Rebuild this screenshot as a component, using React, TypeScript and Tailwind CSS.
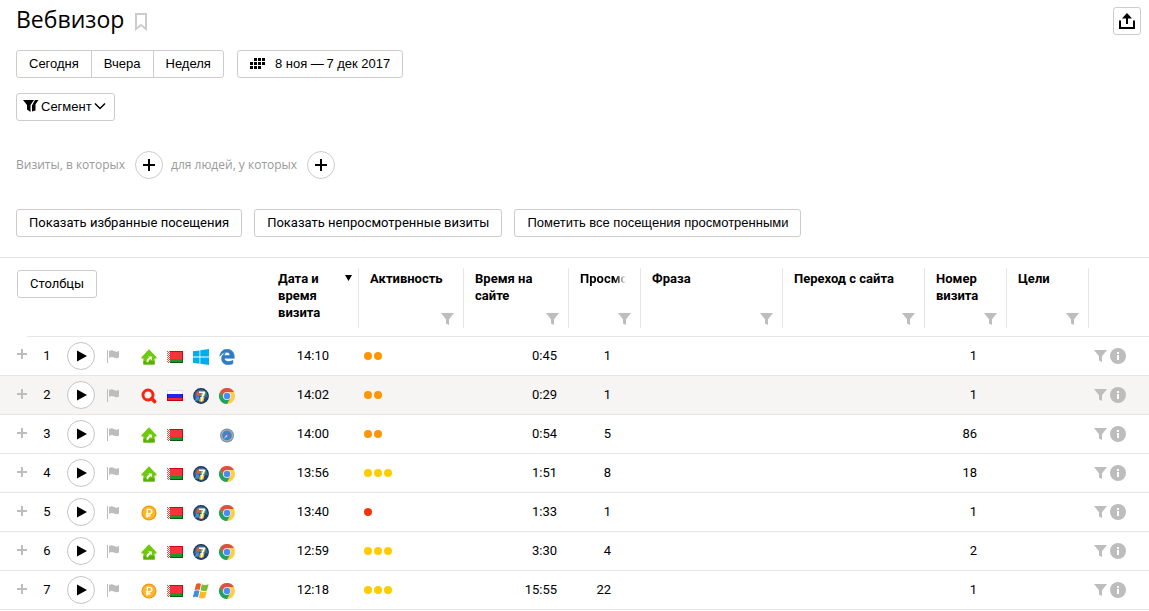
import type { ReactNode } from "react";
import { FaEdgeLegacy } from "react-icons/fa6";

type Source = "direct" | "search" | "ad";
type Country = "by" | "ru";
type System = "win10" | "win7" | "winxp" | "none";
type Browser = "edge" | "chrome" | "safari";

interface Visit {
  id: number;
  source: Source;
  country: Country;
  system: System;
  browser: Browser;
  time: string;
  activity: number;
  duration: string;
  views: number;
  visitNumber: number;
}

const visits: Visit[] = [
  { id: 1, source: "direct", country: "by", system: "win10", browser: "edge", time: "14:10", activity: 2, duration: "0:45", views: 1, visitNumber: 1 },
  { id: 2, source: "search", country: "ru", system: "win7", browser: "chrome", time: "14:02", activity: 2, duration: "0:29", views: 1, visitNumber: 1 },
  { id: 3, source: "direct", country: "by", system: "none", browser: "safari", time: "14:00", activity: 2, duration: "0:54", views: 5, visitNumber: 86 },
  { id: 4, source: "direct", country: "by", system: "win7", browser: "chrome", time: "13:56", activity: 3, duration: "1:51", views: 8, visitNumber: 18 },
  { id: 5, source: "ad", country: "by", system: "win7", browser: "chrome", time: "13:40", activity: 1, duration: "1:33", views: 1, visitNumber: 1 },
  { id: 6, source: "direct", country: "by", system: "win7", browser: "chrome", time: "12:59", activity: 3, duration: "3:30", views: 4, visitNumber: 2 },
  { id: 7, source: "ad", country: "by", system: "winxp", browser: "chrome", time: "12:18", activity: 3, duration: "15:55", views: 22, visitNumber: 1 },
];

const activityColors: Record<number, string> = {
  1: "bg-[#f5330f]",
  2: "bg-[#ff9500]",
  3: "bg-[#ffcc00]",
};

const FilterIcon = () => (
  <svg width="13" height="12" viewBox="0 0 13 12" fill="#bdbdbd">
    <path d="M0 0h13L8 6.2V12L5 10.4V6.2z" />
  </svg>
);

const InfoIcon = () => (
  <svg width="16" height="16" viewBox="0 0 16 16">
    <circle cx="8" cy="8" r="8" fill="#bdbdbd" />
    <path d="M7 4h2v2H7zM7 7h2v5H7z" fill="#fff" />
  </svg>
);

const PlusIcon = () => (
  <svg width="12" height="12" viewBox="0 0 12 12" fill="#000">
    <path d="M5 0h2v5h5v2H7v5H5V7H0V5h5z" />
  </svg>
);

const HouseIcon = () => (
  <svg width="16" height="16" viewBox="0 0 16 16">
    <path d="M8 .3 15.6 8.2V9.4H13.6V15.5H2.4V9.4H.4V8.2z" fill="#6fc90c" />
    <path d="M2.4 12h11.2v3.5H2.4z" fill="#58b000" />
    <path d="M5.6 13.2C5.2 11 6.2 9.4 8.4 8.8L7 7.4H10.8V11.2L9.6 10C8.2 10.6 7.4 11.6 7.4 13.2z" fill="#fff" />
  </svg>
);

const SearchIcon = () => (
  <svg width="16" height="16" viewBox="0 0 16 16" fill="none">
    <circle cx="7" cy="7" r="5" stroke="#f5250e" strokeWidth="3" />
    <path d="m10.6 10.6 3 3" stroke="#f5250e" strokeWidth="3.6" strokeLinecap="round" />
  </svg>
);

const AdIcon = () => (
  <svg width="16" height="16" viewBox="0 0 16 16">
    <circle cx="8" cy="8" r="7.6" fill="#f29a13" />
    <circle cx="8" cy="8" r="6.3" fill="#fdb52e" />
    <path d="M6.3 12.4V4.4H8.6a2.1 2.1 0 0 1 0 4.4H4.9M4.9 10.7H9.4" fill="none" stroke="#fff" strokeWidth="1.4" />
  </svg>
);

const BelarusFlag = () => (
  <svg width="16" height="16" viewBox="0 0 16 16" shapeRendering="crispEdges">
    <path d="M0 2h16v8H0z" fill="#c80a14" />
    <path d="M3 3h12v7H3z" fill="#fa323c" />
    <path d="M0 10h16v4H0z" fill="#0a5a14" />
    <path d="M3 10h12v3H3z" fill="#1f9628" />
    <path d="M0 2h3v12H0z" fill="#fff" />
    <path d="M0 2h1v1H0zM2 2h1v1H2zM1 3h1v1H1zM0 4h1v1H0zM2 4h1v1H2zM1 5h1v1H1zM0 6h1v1H0zM2 6h1v1H2zM1 7h1v1H1zM0 8h1v1H0zM2 8h1v1H2zM1 9h1v1H1zM0 10h1v1H0zM2 10h1v1H2zM1 11h1v1H1zM0 12h1v1H0zM2 12h1v1H2zM1 13h1v1H1z" fill="#e6464c" />
  </svg>
);

const RussiaFlag = () => (
  <svg width="16" height="16" viewBox="0 0 16 16" shapeRendering="crispEdges">
    <path d="M0 2h16v4H0z" fill="#e4e4e4" />
    <path d="M1 3h14v3H1z" fill="#fff" />
    <path d="M0 6h16v4H0z" fill="#0a14b4" />
    <path d="M1 6h14v4H1z" fill="#1e28e6" />
    <path d="M0 10h16v3H0z" fill="#b40a0f" />
    <path d="M1 10h14v2H1z" fill="#f02828" />
  </svg>
);

const WindowsTenIcon = () => (
  <svg width="16" height="16" viewBox="0 0 16 16" fill="#00adef">
    <path d="M0 2.3 6.5 1.4V7.6H0zM7.3 1.3 16 0V7.6H7.3zM0 8.4H6.5V14.7L0 13.7zM7.3 8.4H16V16L7.3 14.8z" />
  </svg>
);

const WindowsPanes = () => (
  <>
    <path d="M3.1 1Q5.5-.4 8 .8L6.6 7Q4.2 5.900 1.600 7.200z" fill="#e8592b" />
    <path d="M8.800 1.200Q11.800 2.600 15.600 1.200L14 7.400Q10.800 8.600 7.500 7.300z" fill="#7cbb36" />
    <path d="M1.400 8Q4 6.800 6.400 7.900L4.900 14.200Q2.600 13-.2 14.400z" fill="#3c8fdc" />
    <path d="M7.300 8.200Q10.400 9.500 13.800 8.300L12.200 14.800Q9 16 5.800 14.700z" fill="#fbbc1c" />
  </>
);

const WindowsXpIcon = () => (
  <svg width="16" height="16" viewBox="0 0 16 16">
    <WindowsPanes />
  </svg>
);

const WindowsSevenIcon = () => (
  <svg width="16" height="16" viewBox="0 0 16 16">
    <circle cx="8" cy="8" r="7.900" fill="#17304f" />
    <circle cx="8" cy="8" r="6.800" fill="#3a6a9c" />
    <path d="M1.400 9.500A6.800 6.800 0 0 0 14.600 9.500Q8 6.500 1.400 9.500z" fill="#1c4472" />
    <g transform="translate(2 3) scale(.7)">
      <WindowsPanes />
    </g>
    <path d="M6 3.400H12V5Q9.800 8.500 9.200 13.400H7.600Q8 8.800 10 5H6z" fill="#fff" />
  </svg>
);

const ChromeIcon = () => (
  <svg width="16" height="16" viewBox="0 0 16 16">
    <circle cx="8" cy="8" r="8" fill="#ffcd40" />
    <path d="M8 4H14.930A8 8 0 0 0 1.070 4L4.540 10z" fill="#dd5144" />
    <path d="M1.070 4A8 8 0 0 0 8 16L11.460 10 8 8 4.540 10z" fill="#1da462" />
    <circle cx="8" cy="8" r="4" fill="#f1f1f1" />
    <circle cx="8" cy="8" r="3.200" fill="#4c8bf5" />
  </svg>
);

const SafariIcon = () => (
  <svg width="16" height="16" viewBox="0 0 16 16">
    <circle cx="8" cy="8.500" r="7" fill="#8a8d92" />
    <circle cx="8" cy="8.500" r="5.800" fill="#b4bcc6" />
    <circle cx="8" cy="8.500" r="4.900" fill="#3f86c8" />
    <path d="M11.200 5.200 8.600 9.100 7.400 7.900z" fill="#e8504a" />
    <path d="M4.800 11.800 7.400 7.900 8.600 9.100z" fill="#dfe9f2" />
  </svg>
);

const sourceIcons: Record<Source, ReactNode> = {
  direct: <HouseIcon />,
  search: <SearchIcon />,
  ad: <AdIcon />,
};

const countryIcons: Record<Country, ReactNode> = {
  by: <BelarusFlag />,
  ru: <RussiaFlag />,
};

const systemIcons: Record<System, ReactNode> = {
  win10: <WindowsTenIcon />,
  win7: <WindowsSevenIcon />,
  winxp: <WindowsXpIcon />,
  none: <span className="w-4" />,
};

const browserIcons: Record<Browser, ReactNode> = {
  edge: <FaEdgeLegacy size={16} color="#2f7cc4" stroke="#2f7cc4" strokeWidth={20} />,
  chrome: <ChromeIcon />,
  safari: <SafariIcon />,
};

const buttonClass = "flex h-7 items-center rounded-[3px] border border-[#ccc] bg-white px-3 pb-[2px] whitespace-nowrap";
const arial = "font-['Liberation_Sans',sans-serif]";
const openSans = "font-['Open_Sans','Noto_Sans',sans-serif]";

const HeaderCell = ({ title, filter = true, sorted = false, clipped = false }: { title: string; filter?: boolean; sorted?: boolean; clipped?: boolean }) => (
  <th scope="col" className="p-0 pt-[10px] pb-2 text-left align-top font-bold">
    <div className={`relative flex h-[60px] justify-between pt-[2px] pr-[10px] ${sorted ? "pl-3" : "border-l border-[#e6e6e6] pl-[11px]"}`}>
      <span className={clipped ? "w-[46px] overflow-hidden [mask-image:linear-gradient(to_right,#000_75%,transparent)]" : sorted ? "w-14" : ""}>{title}</span>
      {sorted && (
        <svg className="mt-1 -mr-1" width="7" height="8" viewBox="0 0 7 8">
          <path d="M0 1h7L3.500 7z" />
        </svg>
      )}
      {filter && (
        <button type="button" aria-label="Фильтр" className="absolute right-[9px] bottom-[3px]">
          <FilterIcon />
        </button>
      )}
    </div>
  </th>
);

const VisitRow = ({ visit }: { visit: Visit }) => {
  const cell = `border-b border-[#e6e6e6] p-0 ${visit.id === 1 ? "h-10 border-t" : "h-[39px]"}`;
  const number = `${cell} pb-[2px] text-right`;

  return (
    <tr className={visit.id === 2 ? "bg-[#f6f5f3]" : ""}>
      <td className="border-b border-[#e6e6e6] p-0">
        <button type="button" aria-label="Развернуть" className="mb-[3px] ml-4 flex">
          <svg width="12" height="12" viewBox="0 0 12 12" fill="#bdbdbd">
            <path d="M5 1h2v4h4v2H7v4H5V7H1V5h4z" />
          </svg>
        </button>
      </td>
      <td className={`${cell} pb-[2px] text-center`}>{visit.id}</td>
      <td className={cell}>
        <button type="button" aria-label="Воспроизвести" className="flex size-7 items-center justify-center rounded-full border border-[#c4c4c4] bg-white">
          <svg width="12" height="12" viewBox="0 0 12 12">
            <path d="M2 .500 12 6 2 11.500z" />
          </svg>
        </button>
      </td>
      <td className={cell}>
        <button type="button" aria-label="Пометить" className="flex">
          <svg width="12" height="13" viewBox="0 0 12 13" fill="#bdbdbd">
            <path d="M0 0h1v13H0zM2 1.200Q4.500-.400 7 1T12 .800V7.500Q9.500 8.800 7 7.600T2 8z" />
          </svg>
        </button>
      </td>
      <td className={cell}>
        <div className="flex items-center gap-[10px] pt-[2px]">
          {sourceIcons[visit.source]}
          {countryIcons[visit.country]}
          {systemIcons[visit.system]}
          {browserIcons[visit.browser]}
        </div>
      </td>
      <td className={`${number} pr-[29px]`}>{visit.time}</td>
      <td className={cell}>
        <div className="flex gap-[2px] pl-[6px]">
          {Array.from({ length: visit.activity }, (_, i) => (
            <span key={i} className={`size-2 rounded-full ${activityColors[visit.activity]}`} />
          ))}
        </div>
      </td>
      <td className={`${number} pr-[11px]`}>{visit.duration}</td>
      <td className={`${number} pr-[29px]`}>{visit.views}</td>
      <td className={cell} />
      <td className={cell} />
      <td className={`${number} pr-[29px]`}>{visit.visitNumber}</td>
      <td className={cell} />
      <td className={cell}>
        <div className="flex items-center gap-[3px] pl-[6px]">
          <button type="button" aria-label="Фильтр по визиту">
            <FilterIcon />
          </button>
          <button type="button" aria-label="Информация">
            <InfoIcon />
          </button>
        </div>
      </td>
    </tr>
  );
};

const App = () => {
  return (
    <main className="bg-white font-[Roboto,'Noto_Sans',sans-serif] text-[13px] leading-[17px] text-black [&_svg]:block">
      <header className="flex items-start justify-between pt-[7px] pr-2 pl-4">
        <div className="flex items-center gap-[11px]">
          <h1 className={`${openSans} text-[23px] leading-6`}>Вебвизор</h1>
          <button type="button" aria-label="В избранное" className="pt-[5px]">
            <svg width="12" height="18" viewBox="0 0 12 18" fill="none" stroke="#ccc" strokeWidth="2">
              <path d="M1 1h10v15l-5-4-5 4z" />
            </svg>
          </button>
        </div>
        <button type="button" aria-label="Экспорт" className="flex size-7 items-center justify-center rounded-[3px] border border-[#ccc]">
          <svg width="16" height="16" viewBox="0 0 16 16">
            <path d="M8 0 13 5.500H9V11H7V5.500H3zM0 7.500H2V14H14V7.500H16V16H0z" />
          </svg>
        </button>
      </header>

      <div className={`mt-[15px] flex gap-[13px] px-4 ${arial}`}>
        <div className="flex h-7 divide-x divide-[#ccc] rounded-[3px] border border-[#ccc]">
          <button type="button" className="px-3 pb-[2px]">Сегодня</button>
          <button type="button" className="px-3 pb-[2px]">Вчера</button>
          <button type="button" className="px-3 pb-[2px]">Неделя</button>
        </div>
        <button type="button" className={`${buttonClass} gap-[10px]`}>
          <svg width="15" height="11" viewBox="0 0 15 11" shapeRendering="crispEdges">
            <path d="M4 0h3v3H4zM8 0h3v3H8zM12 0h3v3h-3zM0 4h3v3H0zM4 4h3v3H4zM8 4h3v3H8zM12 4h3v3h-3zM0 8h3v3H0zM4 8h3v3H4zM8 8h3v3H8z" />
          </svg>
          {"8 ноя —\u20097 дек 2017"}
        </button>
      </div>

      <div className={`mt-[15px] flex px-4 ${arial}`}>
        <button type="button" className="flex h-7 items-center gap-[2px] rounded-[3px] border border-[#ccc] pr-2 pb-[2px] pl-[6px]">
          <svg width="16" height="12" viewBox="0 0 16 12">
            <path d="M0 0h11L7.500 5V12L4 9.500V5zM12 0h3.500L12.500 4.200V10.500L9 11.500V5.500z" />
          </svg>
          Сегмент
          <svg width="12" height="8" viewBox="0 0 12 8" fill="none" stroke="#000" strokeWidth="1.500">
            <path d="m1 1.500 5 5 5-5" />
          </svg>
        </button>
      </div>

      <div className="mt-[30px] flex items-center px-4 text-[#999]">
        <span className={`${openSans} text-xs`}>Визиты, в которых</span>
        <button type="button" aria-label="Добавить условие визита" className="mr-2 ml-[10px] flex size-7 items-center justify-center rounded-full border border-[#ccc]">
          <PlusIcon />
        </button>
        <span className={`${openSans} text-xs`}>для людей, у которых</span>
        <button type="button" aria-label="Добавить условие посетителя" className="ml-[10px] flex size-7 items-center justify-center rounded-full border border-[#ccc]">
          <PlusIcon />
        </button>
      </div>

      <div className="mt-[30px] flex gap-3 px-4">
        <button type="button" className={buttonClass}>Показать избранные посещения</button>
        <button type="button" className={buttonClass}>Показать непросмотренные визиты</button>
        <button type="button" className={`${buttonClass} ${arial}`}>Пометить все посещения просмотренными</button>
      </div>

      <table className="mt-5 w-full table-fixed border-separate border-spacing-0 border-t border-[#e6e6e6]">
        <colgroup>
          <col className="w-[27px]" />
          <col className="w-10" />
          <col className="w-10" />
          <col className="w-[34px]" />
          <col className="w-[125px]" />
          <col className="w-[92px]" />
          <col className="w-[105px]" />
          <col className="w-[105px]" />
          <col className="w-[72px]" />
          <col />
          <col />
          <col className="w-[82px]" />
          <col className="w-[82px]" />
          <col className="w-[61px]" />
        </colgroup>
        <thead>
          <tr>
            <td colSpan={5} className="p-0 pt-3 pl-[17px] align-top">
              <button type="button" className={buttonClass}>Столбцы</button>
            </td>
            <HeaderCell title="Дата и время визита" filter={false} sorted />
            <HeaderCell title="Активность" />
            <HeaderCell title="Время на сайте" />
            <HeaderCell title="Просмотры" clipped />
            <HeaderCell title="Фраза" />
            <HeaderCell title="Переход с сайта" />
            <HeaderCell title="Номер визита" />
            <HeaderCell title="Цели" />
            <td className="p-0 pt-[10px] align-top">
              <div className="h-[60px] border-l border-[#e6e6e6]" />
            </td>
          </tr>
        </thead>
        <tbody>
          {visits.map((visit) => (
            <VisitRow key={visit.id} visit={visit} />
          ))}
        </tbody>
      </table>
    </main>
  );
};

export default App;
